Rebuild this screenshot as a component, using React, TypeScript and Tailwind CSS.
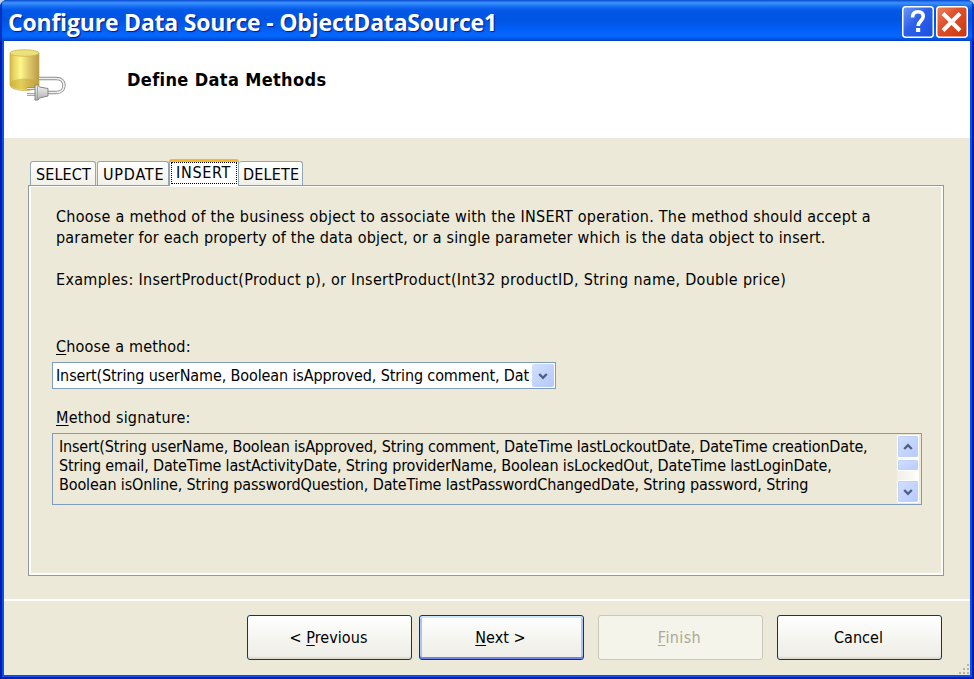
import type { ReactNode } from "react";

function HelpIcon() {
  return (
    <svg width="32" height="32" viewBox="0 0 32 32">
      <defs>
        <linearGradient id="help" x1="0" y1="0" x2="1" y2="1">
          <stop offset="0" stopColor="#6f9af8" />
          <stop offset="0.45" stopColor="#2c60ec" />
          <stop offset="1" stopColor="#1a4fe0" />
        </linearGradient>
      </defs>
      <rect x="0.75" y="0.75" width="30.5" height="30.5" rx="3" fill="url(#help)" stroke="#fff" strokeWidth="1.5" />
      <path d="M10.500 11.500C10.500 7.600 12.800 5.800 16 5.800s5.200 1.800 5.200 4.800c0 4.200-5 4.400-5 9.400" fill="none" stroke="#fff" strokeWidth="3.600" />
      <rect x="14" y="22" width="4.200" height="4" fill="#fff" />
    </svg>
  );
}

function CloseIcon() {
  return (
    <svg width="32" height="32" viewBox="0 0 32 32">
      <defs>
        <linearGradient id="close" x1="0" y1="0" x2="1" y2="1">
          <stop offset="0" stopColor="#ec8564" />
          <stop offset="0.4" stopColor="#e0512c" />
          <stop offset="1" stopColor="#c9350c" />
        </linearGradient>
      </defs>
      <rect x="0.75" y="0.75" width="30.5" height="30.5" rx="3" fill="url(#close)" stroke="#fff" strokeWidth="1.5" />
      <path d="M7 7.5L24 24.5M24 7.5L7 24.5" stroke="#fff" strokeWidth="4" />
    </svg>
  );
}

function DataSourceIcon() {
  return (
    <svg width="60" height="54" viewBox="0 0 60 54">
      <defs>
        <linearGradient id="cyl" x1="0" x2="1" y1="0" y2="0">
          <stop offset="0" stopColor="#d3ba48" />
          <stop offset="0.15" stopColor="#ead766" />
          <stop offset="0.36" stopColor="#fdf789" />
          <stop offset="0.65" stopColor="#dfc96c" />
          <stop offset="1" stopColor="#b89a46" />
        </linearGradient>
        <linearGradient id="plug" x1="0" x2="0" y1="0" y2="1">
          <stop offset="0" stopColor="#f4f4f4" />
          <stop offset="1" stopColor="#b0b0b0" />
        </linearGradient>
      </defs>
      <path d="M1 5v32c0 3 6.500 5.500 14.500 5.500S30 40 30 37V5z" fill="url(#cyl)" stroke="#c4a848" strokeWidth="0.7" />
      <ellipse cx="15.500" cy="36" rx="14" ry="5.500" fill="#c5a42b" opacity="0.5" />
      <ellipse cx="15.500" cy="5" rx="14.500" ry="3.300" fill="#ebe07a" stroke="#cdb650" strokeWidth="0.8" />
      <path d="M30 30.500h17c5.500 0 8 3 8 7s-3 7-8 7h-8" fill="none" stroke="#8e8e8e" strokeWidth="3.400" />
      <path d="M30 30.500h17c5.500 0 8 3 8 7s-3 7-8 7h-8" fill="none" stroke="#f0f0f0" strokeWidth="1.700" />
      <path d="M18 40.500h9M18 46.500h9" stroke="#8c8c8c" strokeWidth="2.600" />
      <path d="M18 40.500h9M18 46.500h9" stroke="#e8e8e8" strokeWidth="1" />
      <path d="M26 37h3l1.500 2 8.500 1.500v7.500L30.500 50 29 52h-3z" fill="url(#plug)" stroke="#858585" strokeWidth="1" />
      <path d="M28.500 38v13" stroke="#999" strokeWidth="0.8" />
    </svg>
  );
}

function Chevron({ up = false }: { up?: boolean }) {
  return (
    <svg width="10" height="8" viewBox="0 0 10 8">
      <path d={up ? "M1.200 6L5 2.200L8.800 6" : "M1.200 2L5 5.800L8.800 2"} fill="none" stroke="#4d6185" strokeWidth="2.400" />
    </svg>
  );
}

const scrollFace =
  "flex items-center justify-center rounded-[2px] border border-white bg-linear-to-br from-[#d3e0fd] to-[#b6cafa] shadow-[inset_0_0_0_1px_#c0d1f8]";

function Tab({ className, children }: { className: string; children: ReactNode }) {
  return (
    <div
      className={`mb-px h-[24px] shrink-0 rounded-t-[3px] border border-b-0 border-[#91a7b4] bg-linear-to-b from-white to-[#f1f0e8] pt-px leading-[23px] whitespace-nowrap ${className}`}
    >
      {children}
    </div>
  );
}

function Button({ className, children }: { className: string; children: ReactNode }) {
  return (
    <button className={`flex h-[45px] w-[165px] shrink-0 items-center justify-center rounded-[3px] border pr-[2px] whitespace-nowrap ${className}`}>
      <span>{children}</span>
    </button>
  );
}

const enabled = "border-[#003c74] bg-linear-to-b from-white via-[#f5f5f1] to-[#eeede6]";

export default function App() {
  return (
    <div className="h-[679px] w-[974px] overflow-hidden bg-[#c3d0e6] font-['DejaVu_Sans_Condensed','DejaVu_Sans',sans-serif] text-[16px] text-black">
      <div className="flex h-full flex-col overflow-hidden rounded-t-[7px] bg-[#001dad] px-[2px] pb-[2px]">
        <header className="-mx-[2px] flex h-[41px] shrink-0 items-center bg-[linear-gradient(180deg,#0c55d8_0px,#3d93fb_3px,#1a72f4_6px,#0458e8_10px,#0054e3_20px,#0260f8_30px,#0568ff_36px,#0353e0_39px,#0243c8_41px)] pt-[3px] pr-[6px] pl-[8px] shadow-[inset_2px_0_1px_#0831bd,inset_-2px_0_1px_#0831bd]">
          <h1 className="grow pb-px font-['Open_Sans',sans-serif] text-[23px] leading-[36px] font-bold tracking-[-0.2px] whitespace-nowrap text-white [text-shadow:1px_1px_1px_#0a1883]">
            Configure Data Source - ObjectDataSource1
          </h1>
          <div className="flex gap-[2px]">
            <HelpIcon />
            <CloseIcon />
          </div>
        </header>

        <div className="flex min-h-0 grow flex-col border-x-2 border-t-0 border-b-2 border-[#0a50ee] bg-[#ece9d8]">
          <section className="flex h-[97px] shrink-0 bg-white pt-[7px] pl-[5px]">
            <DataSourceIcon />
            <h2 className="mt-[20px] ml-[58px] text-[18px] leading-[24px] font-bold tracking-[0.36px] whitespace-nowrap">Define Data Methods</h2>
          </section>

          <main className="flex h-[461px] shrink-0 flex-col pt-[21px] pr-[26px] pl-[24px]">
            <nav className="z-10 flex h-[27px] shrink-0 items-end pl-[2px]">
              <Tab className="w-[66px] pl-[5px] tracking-[0.1px]">SELECT</Tab>
              <Tab className="ml-px w-[72px] pl-[5px] tracking-[0.8px]">UPDATE</Tab>
              <div className="h-[27px] w-[70px] shrink-0 rounded-t-[3px] border-x border-t-[3px] border-x-[#91a7b4] border-t-[#f9b530] bg-white px-px pb-[2px]">
                <div className="h-full border border-dotted border-black pl-[4px] leading-[20px] tracking-[0.7px]">INSERT</div>
              </div>
              <Tab className="w-[64px] border-l-0 pl-[4px] tracking-[0.2px]">DELETE</Tab>
            </nav>
            <div className="-mt-px flex h-[391px] shrink-0 flex-col border border-[#919b9c] pr-[21px] pl-[23px] shadow-[inset_2px_1px_0_#fcfcfa,inset_-2px_-2px_0_#fcfcfa]">
              <div className="mt-[20px] pl-[4px] leading-[21px] whitespace-nowrap">
                <p className="tracking-[0.256px]">Choose a method of the business object to associate with the INSERT operation. The method should accept a</p>
                <p className="tracking-[0.194px]">parameter for each property of the data object, or a single parameter which is the data object to insert.</p>
                <p className="mt-[21px] tracking-[0.305px]">Examples: InsertProduct(Product p), or InsertProduct(Int32 productID, String name, Double price)</p>
              </div>
              <label className="mt-[46px] pl-[4px] leading-[21px] tracking-[0.2px]">
                <u className="underline-offset-2">C</u>hoose a method:
              </label>
              <div className="mt-[5px] flex h-[27px] w-[504px] shrink-0 items-center border border-[#7f9db9] bg-white pl-[3px]">
                <span className="grow tracking-[-0.12px] whitespace-nowrap">Insert(String userName, Boolean isApproved, String comment, Dat</span>
                <span className="mr-px flex h-[23px] w-[22px] items-center justify-center rounded-[2px] bg-linear-to-br from-[#d3e0fd] to-[#b3c8fa]">
                  <Chevron />
                </span>
              </div>
              <label className="mt-[18px] pl-[4px] leading-[21px] tracking-[0.2px]">
                <u className="underline-offset-2">M</u>ethod signature:
              </label>
              <div className="mt-[5px] flex h-[72px] w-[870px] shrink-0 justify-between border border-[#7f9db9] pl-[6px]">
                <div className="pt-[3px] leading-[19px] whitespace-nowrap">
                  <p className="tracking-[-0.165px]">Insert(String userName, Boolean isApproved, String comment, DateTime lastLockoutDate, DateTime creationDate,</p>
                  <p className="tracking-[-0.17px]">String email, DateTime lastActivityDate, String providerName, Boolean isLockedOut, DateTime lastLoginDate,</p>
                  <p className="tracking-[-0.13px]">Boolean isOnline, String passwordQuestion, DateTime lastPasswordChangedDate, String password, String</p>
                </div>
                <div className="mt-px mr-[2px] flex h-[68px] w-[22px] flex-col bg-linear-to-r from-[#f0efe6] to-[#fefefb]">
                  <span className={`h-[23px] ${scrollFace}`}><Chevron up /></span>
                  <span className={`mt-px h-[12px] ${scrollFace}`} />
                  <span className={`mt-auto h-[23px] ${scrollFace}`}><Chevron /></span>
                </div>
              </div>
            </div>
          </main>

          <footer className="relative flex grow border-t-2 border-white pt-[14px] pl-[243px] tracking-[0.05px]">
            <Button className={`${enabled} shadow-[inset_0_-2px_1px_#dedccf]`}>&lt; <u className="underline-offset-2">P</u>revious</Button>
            <Button className={`${enabled} ml-[7px] shadow-[inset_0_2px_0_#cee7ff,inset_0_-2px_0_#6982ee,inset_2px_0_0_#a9c4f5,inset_-2px_0_0_#a9c4f5]`}><u className="underline-offset-2">N</u>ext &gt;</Button>
            <Button className="ml-[14px] border-[#c9c7ba] bg-[#f5f4ea] tracking-[0.4px] text-[#aca899]"><u className="underline-offset-2">F</u>inish</Button>
            <Button className={`${enabled} ml-[14px] shadow-[inset_0_-2px_1px_#dedccf]`}>Cancel</Button>
            <svg className="absolute right-0 bottom-0" width="12" height="12" viewBox="0 0 12 12" fill="#b8b4a2">
              <path d="M9 1h2v2h-2zM5 5h2v2h-2zM9 5h2v2h-2zM1 9h2v2h-2zM5 9h2v2h-2zM9 9h2v2h-2z" />
            </svg>
          </footer>
        </div>
      </div>
    </div>
  );
}
